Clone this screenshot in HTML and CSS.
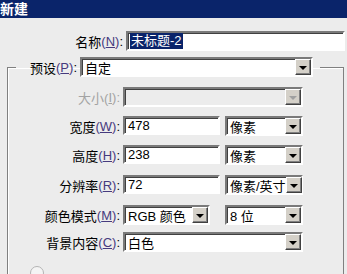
FILE: index.html
```html
<!DOCTYPE html>
<html>
<head>
    <meta name="viewport" content="width=device-width, user-scalable=no">
    <link rel="stylesheet" href="styles.css">
</head>
<body>
<div class="title-bar">新建</div>
<div class="name-row">
    <label class="label">名称<span class="key">(<u>N</u>)</span>:</label>
    <div class="field name-field"><span class="selected">未标题-2</span></div>
</div>
<fieldset class="group">
    <legend class="legend">
        <label class="label preset-label">预设<span class="key">(<u>P</u>)</span>:</label>
        <div class="field select preset-select"><span>自定</span><div class="arrow"></div></div>
    </legend>
    <div class="rows">
        <label class="label disabled">大小(<u>I</u>):</label>
        <div class="field select wide off"><span></span><div class="arrow"></div></div>

        <label class="label">宽度<span class="key">(<u>W</u>)</span>:</label>
        <div class="pair">
            <div class="field text-field">478</div>
            <div class="field select unit"><span>像素</span><div class="arrow"></div></div>
        </div>

        <label class="label">高度<span class="key">(<u>H</u>)</span>:</label>
        <div class="pair">
            <div class="field text-field">238</div>
            <div class="field select unit"><span>像素</span><div class="arrow"></div></div>
        </div>

        <label class="label gap-up">分辨率<span class="key">(<u>R</u>)</span>:</label>
        <div class="pair gap-up">
            <div class="field text-field">72</div>
            <div class="field select unit"><span>像素/英寸</span><div class="arrow"></div></div>
        </div>

        <label class="label gap-up">颜色模式<span class="key">(<u>M</u>)</span>:</label>
        <div class="pair gap-up">
            <div class="field select mode"><span>RGB 颜色</span><div class="arrow"></div></div>
            <div class="field select unit"><span>8 位</span><div class="arrow"></div></div>
        </div>

        <label class="label gap-down">背景内容<span class="key">(<u>C</u>)</span>:</label>
        <div class="field select wide gap-down"><span>白色</span><div class="arrow"></div></div>
    </div>
    <div class="radio"></div>
</fieldset>
</body>
</html>
```

FILE: styles.css
```css
body {
    margin: 0;
    overflow: hidden;
    background-color: #ececec;
    font-family: "Liberation Sans", "Noto Sans CJK SC", sans-serif;
    font-size: 13px;
    color: #000;
}

.title-bar {
    height: 18px;
    line-height: 18px;
    background-color: #0a246a;
    color: #fff;
    font-weight: bold;
    font-size: 14px;
}

.label {
    display: flex;
    align-items: center;
    justify-content: flex-end;
    height: 20px;
    white-space: nowrap;
}
.key {
    color: #463a7e;
}
.disabled {
    color: #a3a3a3;
}

.name-row {
    display: flex;
    gap: 3px;
    margin-top: 13px;
}
.name-row .label {
    width: 123px;
}

.field {
    box-sizing: border-box;
    height: 20px;
    background-color: #fff;
    border: 2px solid;
    border-color: #7a7a7a #fff #fff #7a7a7a;
    box-shadow: inset 1px 1px #404040;
    display: flex;
    align-items: center;
    padding-left: 2px;
    white-space: nowrap;
}
.name-field {
    width: 219px;
}
.selected {
    background-color: #0a246a;
    color: #fff;
    padding: 0 1px;
    line-height: 16px;
}

.select span {
    flex: 1;
    padding-left: 1px;
}
.arrow {
    box-sizing: border-box;
    flex: none;
    width: 16px;
    height: 16px;
    background-color: #d4d0c8;
    border: 1px solid;
    border-color: #fff #404040 #404040 #fff;
    box-shadow: inset -1px -1px #808080;
    display: flex;
    justify-content: center;
    align-items: center;
}
.arrow::after {
    content: "";
    border-left: 4px solid transparent;
    border-right: 4px solid transparent;
    border-top: 4px solid #000;
    margin-top: 1px;
}
.off {
    background-color: #ececec;
}
.off .arrow::after {
    border-top-color: #a0a0a0;
}

.group {
    margin: 6px 0 0 7px;
    width: 337px;
    box-sizing: border-box;
    padding: 10px 0 0 0;
    border: 1px solid #808080;
    box-shadow: inset 1px 1px #fff;
    height: 240px;
}
.legend {
    display: flex;
    gap: 3px;
    margin-left: 8px;
    padding: 0 7px 0 14px;
}
.preset-label {
    width: 47px;
}
.preset-select {
    width: 233px;
}

.rows {
    display: grid;
    grid-template-columns: 112px 180px;
    column-gap: 3px;
    row-gap: 9px;
}
.pair {
    display: flex;
    justify-content: space-between;
}
.text-field {
    width: 97px;
    height: 19px;
    padding-left: 3px;
}
.unit {
    width: 78px;
}
.mode {
    width: 87px;
}
.wide {
    width: 180px;
}
.gap-up {
    margin-top: 1px;
}
.gap-down {
    margin-top: -2px;
}

.radio {
    width: 12px;
    height: 12px;
    border-radius: 50%;
    border: 1px solid #b4b4b4;
    background-color: #f4f4f4;
    margin: 14px 0 0 22px;
}
```
